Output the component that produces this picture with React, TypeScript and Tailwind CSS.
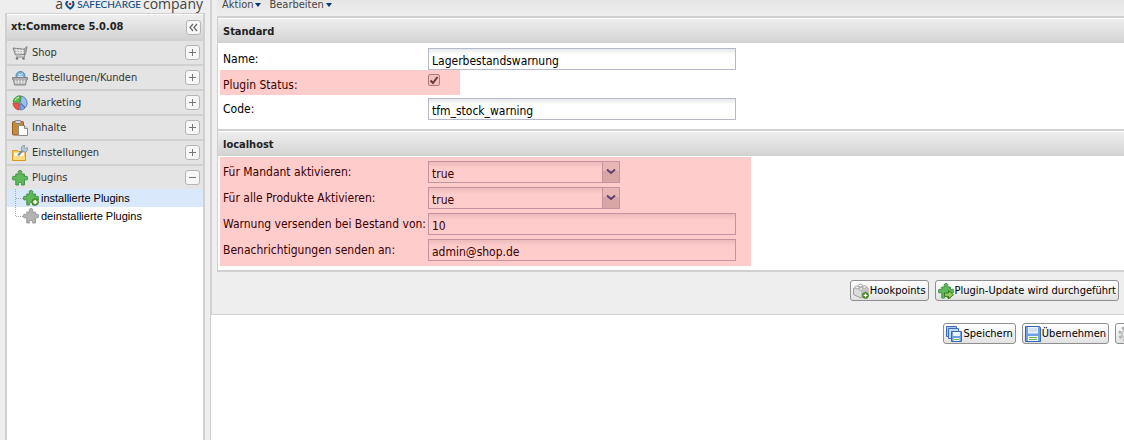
import type { ReactNode } from "react";

interface IconProps {
  className?: string;
}

const PUZZLE =
  "M.8 6.500c1.200-.6 2.200.4 3-.1V4h2.700C7 3 5.600 2 6.500 1 7.200.3 8.900.3 9.500 1c.9 1-.5 2-.1 3h3v2.400c.8.5 1.800-.5 2.800.1.8.7.8 2.500 0 3.200-1 .6-2-.4-2.800 0V15H9.500c-.4-1 .3-1.600-.3-2.200-.6-.5-1.800-.5-2.400 0-.6.6.1 1.200-.3 2.200H3.800V9.700c-.8-.4-1.800.6-3 0-.7-.7-.7-2.500 0-3.200z";

function CartIcon() {
  return (
    <svg viewBox="0 0 16 16" className="h-4 w-4 shrink-0" fill="none">
      <path d="M1 3l11 1.200L15 1.500 13.500 9.500 3.500 10z" fill="#b9b9b9" stroke="#858585" />
      <path d="M2.500 5l10.500.8M3.500 7.700l9.800-.2M4.500 3.800l1 5.500M7.500 4l.3 5M10.500 4.500l-.2 4.500" stroke="#f2f2f2" strokeWidth=".8" />
      <path d="M12.800 4L12.500 12H4" stroke="#8b8b8b" />
      <circle cx="5" cy="13.500" r="1.300" fill="#777" />
      <circle cx="11.500" cy="13.500" r="1.300" fill="#777" />
    </svg>
  );
}

function BasketIcon() {
  return (
    <svg viewBox="0 0 16 16" className="h-4 w-4 shrink-0" fill="none">
      <circle cx="8.500" cy="6" r="4.500" fill="#7fb2dc" stroke="#4b88bb" />
      <path d="M6.500 4l2 1 2-1.500M6 6.500l3-.5 2 1" stroke="#d9efff" />
      <path d="M.5 7.500h15v2h-1L13.500 15h-11L1.500 9.500h-1z" fill="#b0b0b0" stroke="#858585" />
      <path d="M3.500 10l.6 4M6.500 10v4M9.500 10v4M12.500 10l-.6 4M2.500 12h11" stroke="#e2e2e2" />
    </svg>
  );
}

function PieIcon() {
  return (
    <svg viewBox="0 0 16 16" className="h-4 w-4 shrink-0">
      <path d="M8.500 7.500L9 1a7 7 0 0 1 4.500 11.500z" fill="#9cbfee" stroke="#4470ae" strokeWidth=".8" />
      <path d="M8 7.500L1 7A7 7 0 0 1 8.500.8z" fill="#5cbd4c" stroke="#3a8e35" strokeWidth=".8" />
      <path d="M8.500 8.500l4.500 4.500a7 7 0 0 1-5 2z" fill="#7aa7e0" stroke="#4470ae" strokeWidth=".8" />
      <path d="M7.500 8.500L7 15A7 7 0 0 1 1 8z" fill="#e8564a" stroke="#b23b33" strokeWidth=".8" />
      <path d="M3 5.500A5 5 0 0 1 7 2.200" stroke="#c9f0bd" fill="none" />
    </svg>
  );
}

function PasteIcon() {
  return (
    <svg viewBox="0 0 16 16" className="h-4 w-4 shrink-0">
      <rect x=".5" y="1.500" width="11" height="13.500" rx="1" fill="#c98a3a" stroke="#94591b" />
      <rect x="3" y=".5" width="6" height="3" rx="1" fill="#d5d5d5" stroke="#777" strokeWidth=".8" />
      <path d="M6.500 5.500h6l3 3V15.500h-9z" fill="#fff" stroke="#8a8a8a" />
      <path d="M12.500 5.500v3h3" fill="#ddd" stroke="#8a8a8a" />
    </svg>
  );
}

function SettingsIcon() {
  return (
    <svg viewBox="0 0 16 16" className="h-4 w-4 shrink-0">
      <path d="M.5 5.500h5l1 1h7v9H.5z" fill="#f4c65a" stroke="#d99a25" />
      <path d="M2 7.500h10v4H2z" fill="#fff8df" />
      <path d="M1 11.500h12V15H1z" fill="#ffdc7e" />
      <path d="M6 10.500l5-5.500" stroke="#7390ad" strokeWidth="2" />
      <path d="M10 5.500a3 3 0 0 1 2.800-5L12 2.500l1.500 1 1.800-1a3 3 0 0 1-4.300 4z" fill="#b8c7d6" stroke="#7488a0" strokeWidth=".7" />
    </svg>
  );
}

function PuzzleIcon({ className = "fill-[#5fb85b] stroke-[#3f9142]" }: IconProps) {
  return (
    <svg viewBox="0 0 16 16" className={`h-4 w-4 shrink-0 ${className}`}>
      <path d={PUZZLE} />
    </svg>
  );
}

function PuzzleAddIcon() {
  return (
    <svg viewBox="0 0 16 16" className="h-4 w-4 shrink-0">
      <path d={PUZZLE} fill="#5fb85b" stroke="#3f9142" />
      <circle cx="12.200" cy="12" r="3.300" fill="#6da644" stroke="#37701c" strokeWidth=".8" />
      <path d="M12.200 10v4M10.200 12h4" stroke="#fff" strokeWidth="1.600" />
    </svg>
  );
}

function PuzzleGoIcon() {
  return (
    <svg viewBox="0 0 16 16" className="h-4 w-4 shrink-0">
      <path d={PUZZLE} fill="#5fb85b" stroke="#3f9142" />
      <path d="M6.500 10h4V7.500l5 4.200-5 4.200v-2.500h-4z" fill="#8fce5d" stroke="#376f1b" strokeWidth=".9" />
    </svg>
  );
}

function BrickAddIcon() {
  return (
    <svg viewBox="0 0 16 16" className="h-4 w-4 shrink-0">
      <path d="M.5 5.500L7 2.500l8 2.500v6l-7 4-7.500-3.500z" fill="#dcdcdc" stroke="#9a9a9a" />
      <path d="M8 8.500l7-3.500v6l-7 4z" fill="#bdbdbd" />
      <g fill="#f2f2f2" stroke="#9a9a9a" strokeWidth=".8">
        <ellipse cx="4" cy="4.500" rx="2" ry="1.400" />
        <ellipse cx="7.500" cy="2.500" rx="2" ry="1.400" />
        <ellipse cx="8" cy="6" rx="2" ry="1.400" />
        <ellipse cx="11.500" cy="4" rx="2" ry="1.400" />
      </g>
      <circle cx="12.500" cy="12.500" r="3" fill="#5a9b34" stroke="#37701c" strokeWidth=".8" />
      <path d="M12.500 10.700v3.600M10.700 12.500h3.600" stroke="#fff" strokeWidth="1.200" />
    </svg>
  );
}

function DiskIcon() {
  return (
    <svg viewBox="0 0 16 16" className="h-4 w-4 shrink-0">
      <path d="M.5.5h14l1 1v14H.5z" fill="#6f9fe4" stroke="#3565b4" />
      <path d="M3 1h10v6.500H3z" fill="#e9f2ff" />
      <path d="M4 3h8M4 5h8" stroke="#b8cfef" />
      <path d="M3 10h10v5H3z" fill="#f4f4f4" />
      <path d="M4 11.500h8M4 13.500h8" stroke="#62b152" />
    </svg>
  );
}

function DiskMultipleIcon() {
  return (
    <svg viewBox="0 0 16 16" className="h-4 w-4 shrink-0">
      <path d="M.5.5h10v10H.5z" fill="#a9c8f2" stroke="#3b6db8" />
      <path d="M2.500 2.500h10v10h-10z" fill="#c6dbf7" stroke="#3b6db8" />
      <path d="M5.500 5.500h10v10h-10z" fill="#6f9fe4" stroke="#3565b4" />
      <path d="M7 6h7v4H7z" fill="#edf5ff" />
      <path d="M7.500 12h6v3h-6z" fill="#f4f4f4" />
      <path d="M8 13.500h5" stroke="#62b152" />
    </svg>
  );
}

function GearIcon() {
  return (
    <svg viewBox="0 0 16 16" className="h-4 w-4 shrink-0" fill="none">
      <circle cx="8" cy="8" r="6" stroke="#b5b5b5" strokeWidth="3.500" strokeDasharray="2.700 2" />
      <circle cx="8" cy="8" r="4" stroke="#c6c6c6" strokeWidth="2" />
    </svg>
  );
}

const menu = [
  { label: "Shop", icon: <CartIcon /> },
  { label: "Bestellungen/Kunden", icon: <BasketIcon /> },
  { label: "Marketing", icon: <PieIcon /> },
  { label: "Inhalte", icon: <PasteIcon /> },
  { label: "Einstellungen", icon: <SettingsIcon /> },
  { label: "Plugins", icon: <PuzzleIcon />, open: true },
];

function ToolBox({ type }: { type: "plus" | "minus" | "collapse" }) {
  return (
    <svg viewBox="0 0 15 15" className="h-[15px] w-[15px] shrink-0" fill="none">
      <rect x=".5" y=".5" width="14" height="14" rx="2.500" fill="#f7f7f7" stroke="#b4b4b4" />
      {type === "plus" && <path d="M4 7.500h7M7.500 4v7" stroke="#777" />}
      {type === "minus" && <path d="M4 7.500h7" stroke="#777" />}
      {type === "collapse" && <path d="M7 4L4 7.500 7 11M11 4L8 7.500l3 3.500" stroke="#666" strokeWidth="1.200" />}
    </svg>
  );
}

function Sidebar() {
  return (
    <aside className="flex w-[205px] shrink-0 flex-col pl-[5px]">
      <div className="flex h-[13px] items-end justify-end gap-[2px] pr-[2px] font-['Open_Sans',sans-serif] text-sm leading-[18px] text-[#444]">
        <span>a</span>
        <svg viewBox="0 0 10 12" className="h-3 w-[10px]" fill="none">
          <path d="M3 0C0 2 1 5 5 7.500" stroke="#0d4f87" strokeWidth="2" />
          <path d="M7.500 0c2 3 1 6-3 8" stroke="#0d4f87" strokeWidth="2" />
          <circle cx="5" cy="3" r="1.300" fill="#d8232a" />
        </svg>
        <span className="font-['Lato',sans-serif] text-[10px] font-medium text-[#0d4f87]">SAFECHARGE</span>
        <span>company</span>
      </div>
      <div className="flex flex-1 flex-col border-2 border-t border-b-0 border-[#d0d0d0] bg-white">
        <div className="flex h-[25px] items-center justify-between border-t border-white bg-linear-to-b from-[#eeeeee] to-[#d4d4d4] pr-[2px] pl-1">
          <h1 className="pt-px font-bold text-[#222]">xt:Commerce 5.0.08</h1>
          <button aria-label="Navigation einklappen">
            <ToolBox type="collapse" />
          </button>
        </div>
        <nav>
          {menu.map((item) => (
            <button
              key={item.label}
              aria-expanded={!!item.open}
              className="flex h-[25px] w-full items-center gap-1 border-t-2 border-[#d0d0d0] bg-[#e4e4e4] pr-[3px] pl-[5px] text-left text-[#333]"
            >
              {item.icon}
              <span className="flex-1 pt-px">{item.label}</span>
              <ToolBox type={item.open ? "minus" : "plus"} />
            </button>
          ))}
          <ul className="font-['Liberation_Sans',Arial,sans-serif] text-[11px] text-black">
            <li className="flex h-[18px] items-center bg-[#d9e8fb] pl-2">
              <svg viewBox="0 0 8 18" className="h-[18px] w-2" fill="none" stroke="#aaa" strokeDasharray="1 1">
                <path d="M.5 0v18M1 9.500h7" />
              </svg>
              <PuzzleAddIcon />
              <a href="#installed" className="pl-[2px]">installierte Plugins</a>
            </li>
            <li className="flex h-[18px] items-center pl-2">
              <svg viewBox="0 0 8 18" className="h-[18px] w-2" fill="none" stroke="#aaa" strokeDasharray="1 1">
                <path d="M.5 0v10M1 9.500h7" />
              </svg>
              <PuzzleIcon className="fill-[#b3b3b3] stroke-[#999]" />
              <a href="#uninstalled" className="pl-[2px]">deinstallierte Plugins</a>
            </li>
          </ul>
        </nav>
      </div>
    </aside>
  );
}

function MenuButton({ children }: { children: ReactNode }) {
  return (
    <button className="flex items-center gap-[2px] leading-[14px]">
      {children}
      <svg viewBox="0 0 6 4" className="h-1 w-1.5 fill-[#083772]">
        <path d="M0 0h6L3 4z" />
      </svg>
    </button>
  );
}

function SectionTitle({ children }: { children: ReactNode }) {
  return (
    <h2 className="h-[25px] border-t border-b border-t-white border-b-[#d0d0d0] bg-linear-to-b from-[#eeeeee] to-[#d4d4d4] pl-[5px] leading-[25px] font-bold text-[#222]">
      {children}
    </h2>
  );
}

function Row({ id, label, children }: { id: string; label: string; children: ReactNode }) {
  return (
    <div className="flex h-[22px]">
      <label htmlFor={id} className="w-[205px] shrink-0 leading-[22px] whitespace-nowrap">
        {label}
      </label>
      {children}
    </div>
  );
}

function TextField({ id, value }: { id: string; value: string }) {
  return (
    <input
      id={id}
      defaultValue={value}
      className="h-[22px] w-[308px] border border-[#b5b8c8] bg-linear-to-b from-[#e6eaea] to-white to-30% px-[3px] pt-[3px]"
    />
  );
}

function SelectField({ id }: { id: string }) {
  return (
    <div className="relative w-48">
      <select
        id={id}
        className="h-[22px] w-full appearance-none border border-[#b5b8c8] bg-linear-to-b from-[#e6eaea] to-white to-30% px-[3px] pt-[3px]"
      >
        <option>true</option>
        <option>false</option>
      </select>
      <svg viewBox="0 0 18 22" className="pointer-events-none absolute top-0 right-0 h-[22px] w-[18px]">
        <rect x=".5" y=".5" width="17" height="21" fill="#e4e4e4" stroke="#b5b8c8" />
        <rect x="1" y="10" width="16" height="11" fill="#d0d0d0" />
        <path d="M5 8.500l4 3.500 4-3.500" fill="none" stroke="#2f4f8c" strokeWidth="2" />
      </svg>
    </div>
  );
}

function Button({ icon, children }: { icon: ReactNode; children?: ReactNode }) {
  return (
    <button className="flex h-[21px] shrink-0 items-center gap-px rounded-[3px] border border-[#8f8f8f] bg-linear-to-b from-white to-[#e2e2e2] px-[2px] whitespace-nowrap">
      {icon}
      <span className="pt-px">{children}</span>
    </button>
  );
}

export default function App() {
  return (
    <div className="flex min-h-screen overflow-hidden bg-[#eeeeee] font-['DejaVu_Sans_Condensed',Tahoma,sans-serif] text-[11px] text-black">
      <Sidebar />
      <main className="ml-[5px] flex min-w-0 flex-1 flex-col border-l border-[#d0d0d0] bg-white">
        <div className="border-b border-l border-[#d0d0d0] bg-[#eeeeee] pb-[13px] pl-[5px]">
          <div className="flex h-4 items-end gap-2 bg-linear-to-b from-[#e6e6e6] to-[#eeeeee] pb-1 pl-[5px] text-[#444]">
            <MenuButton>Aktion</MenuButton>
            <MenuButton>Bearbeiten</MenuButton>
          </div>

          <form className="border-y-2 border-l border-[#d0d0d0] bg-white">
            <SectionTitle>Standard</SectionTitle>
            <div className="relative flex flex-col gap-1 px-[5px] pt-[5px] pb-[9px] text-xs">
              <Row id="name" label="Name:">
                <TextField id="name" value="Lagerbestandswarnung" />
              </Row>
              <div className="flex h-5 items-start">
                <label htmlFor="status" className="w-[205px] shrink-0 leading-[22px]">Plugin Status:</label>
                <input
                  id="status"
                  type="checkbox"
                  defaultChecked
                  className="peer h-3 w-3 appearance-none rounded-[2px] border border-[#999] bg-[#f0f0f0]"
                />
                <svg viewBox="0 0 12 12" className="pointer-events-none -ml-3 hidden h-3 w-3 peer-checked:block" fill="none">
                  <path d="M2.500 6.500l2.500 2.500L9.500 3" stroke="#444" strokeWidth="2" />
                </svg>
              </div>
              <Row id="code" label="Code:">
                <TextField id="code" value="tfm_stock_warning" />
              </Row>
              <div className="pointer-events-none absolute top-[27px] left-[2px] h-[25px] w-[240px] bg-[#ff0000]/20" />
            </div>

            <div className="border-t-2 border-[#d0d0d0]">
              <SectionTitle>localhost</SectionTitle>
            </div>
            <div className="relative flex flex-col gap-1 px-[5px] pt-[5px] pb-[9px] text-xs">
              <Row id="client" label="Für Mandant aktivieren:">
                <SelectField id="client" />
              </Row>
              <Row id="products" label="Für alle Produkte Aktivieren:">
                <SelectField id="products" />
              </Row>
              <Row id="stock" label="Warnung versenden bei Bestand von:">
                <TextField id="stock" value="10" />
              </Row>
              <Row id="mail" label="Benachrichtigungen senden an:">
                <TextField id="mail" value="admin@shop.de" />
              </Row>
              <div className="pointer-events-none absolute top-px bottom-1 left-[2px] w-[531px] bg-[#ff0000]/20" />
            </div>
          </form>

          <div className="flex justify-end gap-1.5 pt-2 pr-[5px]">
            <Button icon={<BrickAddIcon />}>Hookpoints</Button>
            <Button icon={<PuzzleGoIcon />}>Plugin-Update wird durchgeführt</Button>
          </div>
        </div>

        <div className="flex justify-end gap-1.5 pt-2">
          <Button icon={<DiskMultipleIcon />}>Speichern</Button>
          <Button icon={<DiskIcon />}>Übernehmen</Button>
          <div className="w-[9px] overflow-hidden">
            <Button icon={<GearIcon />} />
          </div>
        </div>
      </main>
    </div>
  );
}
